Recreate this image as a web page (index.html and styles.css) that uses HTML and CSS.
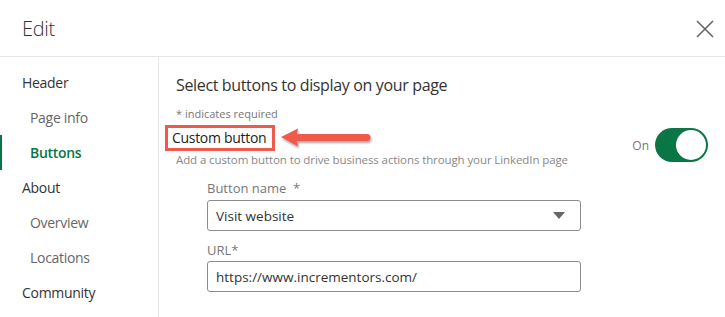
FILE: index.html
```html
<!DOCTYPE html>
<html lang="en">
<head>
  <meta charset="UTF-8">
  <title>Edit</title>
  <link rel="stylesheet" href="styles.css">
</head>
<body>
  <div class="dialog">
    <div class="dialog-header">
      <h1>Edit</h1>
      <button class="close-btn" aria-label="Close">
        <svg width="18" height="18" viewBox="0 0 18 18"><path d="M1 1L17 17M17 1L1 17" stroke="#666" stroke-width="1.6" fill="none"/></svg>
      </button>
    </div>

    <div class="dialog-body">
      <ul class="side-nav">
        <li class="group">Header</li>
        <li class="item">Page info</li>
        <li class="item active">Buttons</li>
        <li class="group">About</li>
        <li class="item">Overview</li>
        <li class="item">Locations</li>
        <li class="group">Community</li>
      </ul>

      <div class="content">
        <h2>Select buttons to display on your page</h2>
        <p class="required-note">* indicates required</p>

        <div class="toggle-row">
          <div class="toggle-text">
            <div class="title-line">
              <span class="custom-title">Custom button</span>
              <svg class="arrow" width="96" height="22" viewBox="0 0 96 22">
                <defs>
                  <filter id="shadow" x="-10%" y="-30%" width="120%" height="180%">
                    <feDropShadow dx="1" dy="2" stdDeviation="1.2" flood-color="#000" flood-opacity="0.35"/>
                  </filter>
                </defs>
                <path d="M3 10L20 1.5L19 7L89 7Q92.5 7 92.5 10.5Q92.5 14 89 14L19 14L20 19.5Z" fill="#ef5a4c" filter="url(#shadow)"/>
              </svg>
            </div>
            <p class="desc">Add a custom button to drive business actions through your LinkedIn page</p>
          </div>
          <div class="switch-wrap">
            <span class="switch-label">On</span>
            <span class="switch"><span class="knob"></span></span>
          </div>
        </div>

        <div class="fields">
          <label class="field-label">Button name&nbsp; *</label>
          <div class="select-box">
            <span>Visit website</span>
            <span class="caret"></span>
          </div>
          <label class="field-label">URL*</label>
          <div class="text-box">https://www.incrementors.com/</div>
        </div>
      </div>
    </div>
  </div>
</body>
</html>
```

FILE: styles.css
```css
/* Edit dialog */
body {
  margin: 0;
  font-family: "Open Sans", "Noto Sans", sans-serif;
  background-color: #fff;
  color: #333;
}

.dialog {
  width: 725px;
  height: 317px;
  overflow: hidden;
}

.dialog-header {
  height: 56px;
  display: flex;
  align-items: center;
  justify-content: space-between;
  border-bottom: 1px solid #e6e6e6;
  padding: 0 8px 0 22px;
}

.dialog-header h1 {
  margin: 0;
  font-size: 20px;
  font-weight: 300;
  color: #333;
  letter-spacing: -0.3px;
}

.close-btn {
  background: none;
  border: none;
  padding: 0;
  width: 24px;
  height: 24px;
  display: flex;
  align-items: center;
  justify-content: center;
  margin-top: 1px;
}

.dialog-body {
  display: flex;
}

.side-nav {
  list-style: none;
  margin: 0;
  padding: 8px 0 0;
  width: 158px;
  border-right: 1px solid #e6e6e6;
  height: 260px;
}

.side-nav li {
  height: 35px;
  line-height: 35px;
  font-size: 14px;
  letter-spacing: -0.3px;
}

.side-nav .group {
  padding-left: 22px;
  color: #333;
}

.side-nav .item {
  padding-left: 30px;
  color: #666;
}

.side-nav .item.active {
  color: #0a7545;
  border-left: 2px solid #0a7545;
  padding-left: 28px;
  font-weight: 600;
}

.content {
  flex: 1;
  padding: 15px 17px 0 17px;
}

.content h2 {
  margin: 0;
  font-size: 16px;
  font-weight: 400;
  color: #333;
  line-height: 26px;
  letter-spacing: -0.35px;
}

.required-note {
  margin: 8px 0 0;
  font-size: 11px;
  color: #777;
  line-height: 16px;
}

.toggle-row {
  display: flex;
  justify-content: space-between;
  align-items: flex-start;
}

.title-line {
  display: flex;
  align-items: center;
  margin-top: 3px;
  margin-left: -11px;
}

.custom-title {
  font-size: 14px;
  color: #222;
  border: 3px solid #ef5a4c;
  padding: 0 6px 0 4px;
  line-height: 20px;
  letter-spacing: -0.3px;
}

.arrow {
  margin-left: 3px;
}

.desc {
  margin: 1px 0 0;
  font-size: 11.5px;
  color: #888;
  line-height: 16px;
  letter-spacing: -0.1px;
}

.switch-wrap {
  display: flex;
  align-items: center;
  gap: 6px;
  margin-top: 6px;
}

.switch-label {
  font-size: 12px;
  color: #777;
}

.switch {
  width: 53px;
  height: 34px;
  border-radius: 17px;
  background-color: #0a7545;
  display: flex;
  align-items: center;
  justify-content: flex-end;
  padding-right: 2px;
  box-sizing: border-box;
}

.switch .knob {
  width: 30px;
  height: 30px;
  border-radius: 50%;
  background-color: #fff;
}

.fields {
  margin-left: 31px;
  width: 374px;
  margin-top: 11px;
}

.field-label {
  display: block;
  font-size: 13px;
  color: #777;
  line-height: 18px;
}

.select-box,
.text-box {
  height: 31px;
  border: 1px solid #8c8c8c;
  border-radius: 3px;
  box-sizing: border-box;
  display: flex;
  align-items: center;
  padding: 0 9px 0 8px;
  font-size: 13.5px;
  color: #333;
  margin: 3px 0 10px;
}

.text-box {
  margin-top: 2px;
}

.select-box {
  justify-content: space-between;
}

.caret {
  width: 0;
  height: 0;
  border-left: 6px solid transparent;
  border-right: 6px solid transparent;
  border-top: 7px solid #666;
  margin-right: 6px;
}
```
